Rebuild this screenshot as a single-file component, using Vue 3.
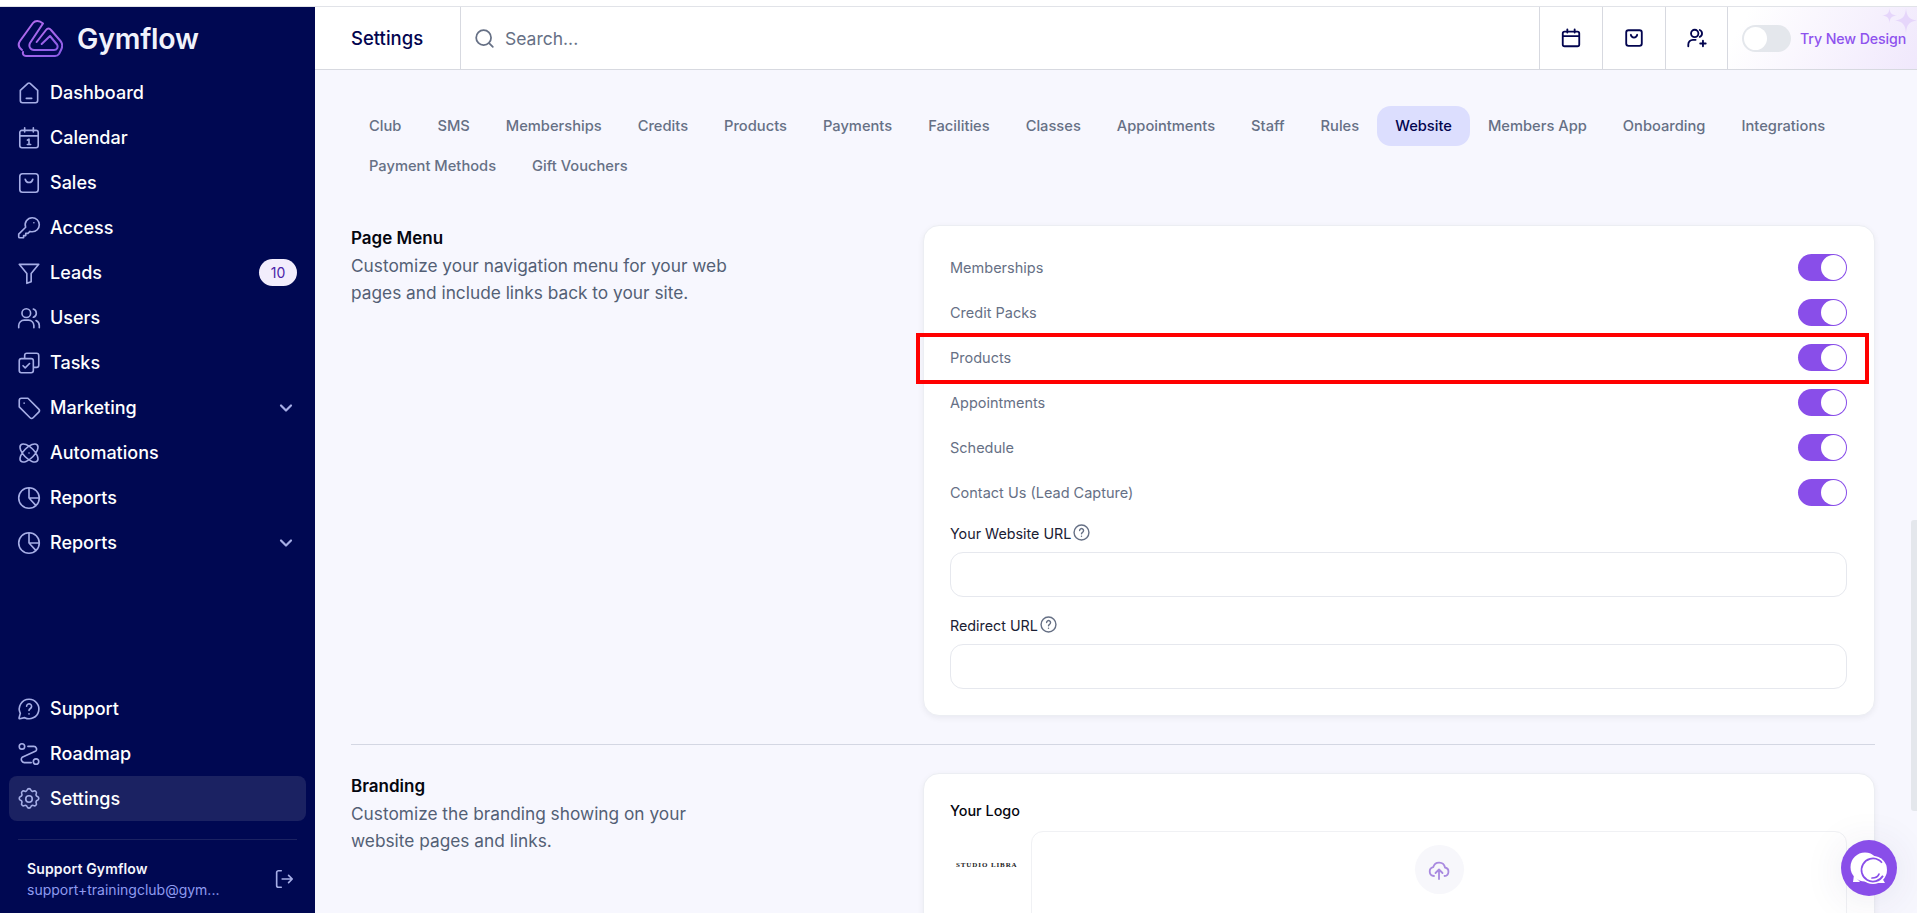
<script setup>
const topNav = [
  { label: 'Dashboard', icon: 'home' },
  { label: 'Calendar', icon: 'calendar' },
  { label: 'Sales', icon: 'bag' },
  { label: 'Access', icon: 'key' },
  { label: 'Leads', icon: 'filter', badge: '10' },
  { label: 'Users', icon: 'users' },
  { label: 'Tasks', icon: 'tasks' },
  { label: 'Marketing', icon: 'tag', arrow: true },
  { label: 'Automations', icon: 'atom' },
  { label: 'Reports', icon: 'pie' },
  { label: 'Reports', icon: 'pie', arrow: true },
]
const bottomNav = [
  { label: 'Support', icon: 'support' },
  { label: 'Roadmap', icon: 'route' },
  { label: 'Settings', icon: 'gear', active: true },
]
const icons = {
  home: 'M4 9.500 11 3.200a1.500 1.500 0 0 1 2 0l7 6.300V19a2 2 0 0 1-2 2H6a2 2 0 0 1-2-2ZM9.500 17h5',
  calendar: 'M3.500 7a2 2 0 0 1 2-2h13a2 2 0 0 1 2 2v12a2 2 0 0 1-2 2h-13a2 2 0 0 1-2-2ZM3.500 10h17M8 2.500v4M16 2.500v4M10.500 14l1.500-1v5M10.500 18h3',
  bag: 'M3.500 6A2.500 2.500 0 0 1 6 3.500h12A2.500 2.500 0 0 1 20.500 6v12a2.500 2.500 0 0 1-2.500 2.500H6A2.500 2.500 0 0 1 3.500 18ZM8.500 8.500c.5 2 2 3 3.500 3s3-1 3.500-3',
  key: 'M15 2.500a6.500 6.500 0 0 1 0 13c-.8 0-1.500-.1-2.100-.4L11 17H9v2H7v2H3.500a1 1 0 0 1-1-1v-2.300l6.400-6.400A6.500 6.500 0 0 1 15 2.500ZM16.500 7.200h.01',
  filter: 'M3 4h18l-7 8.500V20l-4 1.500v-9Z',
  users: 'M9.500 3.500a4 4 0 1 1 0 8 4 4 0 0 1 0-8ZM2.500 21v-2a5 5 0 0 1 5-5h4a5 5 0 0 1 5 5v2M16 3.700a4 4 0 0 1 0 7.600M21.500 21v-2a5 5 0 0 0-3-4.600',
  tasks: 'M8 8V5a2 2 0 0 1 2-2h9a2 2 0 0 1 2 2v9a2 2 0 0 1-2 2h-3M3 10a2 2 0 0 1 2-2h9a2 2 0 0 1 2 2v9a2 2 0 0 1-2 2H5a2 2 0 0 1-2-2ZM6.500 14.500l2 2 4-4',
  tag: 'M3 5a2 2 0 0 1 2-2h6l10 10a2 2 0 0 1 0 2.800L15.800 21a2 2 0 0 1-2.800 0L3 11ZM7.500 7.500h.01',
  atom: 'M12 12h.01M19.500 4.500c-2-2-7 0-11 4s-6 9-4 11 7 0 11-4 6-9 4-11ZM4.500 4.500c-2 2 0 7 4 11s9 6 11 4 0-7-4-11-9-6-11-4Z',
  pie: 'M12 2.500a9.500 9.500 0 1 0 9.500 9.500A9.500 9.500 0 0 0 12 2.500ZM12 2.500V12h9.500M12 12l6.500 7',
  support: 'M12 3a9 9 0 1 1-4 17l-4.500 1a.6.6 0 0 1-.7-.7L4 16a9 9 0 0 1 8-13ZM9.800 9.500a2.300 2.300 0 1 1 3.500 2c-.8.5-1.300 1-1.300 1.800M12 16.500h.01',
  route: 'M5.500 2.500a2.500 2.500 0 1 1 0 5 2.500 2.500 0 0 1 0-5ZM18.500 16.500a2.500 2.500 0 1 1 0 5 2.500 2.500 0 0 1 0-5ZM11 5h5.500a2.500 2.500 0 0 1 1.800 4.200L5.700 15a3 3 0 0 0 2 5H14',
  gear: 'M12 9a3 3 0 1 1 0 6 3 3 0 0 1 0-6ZM10.300 3.600a1.800 1.800 0 0 1 3.400 0 1.800 1.800 0 0 0 2.600 1.100 1.800 1.800 0 0 1 2.400 2.400 1.800 1.800 0 0 0 1.100 2.600 1.800 1.800 0 0 1 0 3.400 1.800 1.800 0 0 0-1.100 2.600 1.800 1.800 0 0 1-2.400 2.400 1.800 1.800 0 0 0-2.600 1.100 1.800 1.800 0 0 1-3.400 0 1.800 1.800 0 0 0-2.600-1.100 1.800 1.800 0 0 1-2.400-2.400 1.800 1.800 0 0 0-1.100-2.600 1.800 1.800 0 0 1 0-3.400 1.800 1.800 0 0 0 1.100-2.600 1.800 1.800 0 0 1 2.400-2.400 1.800 1.800 0 0 0 2.600-1.100Z',
}
const tabs = ['Club', 'SMS', 'Memberships', 'Credits', 'Products', 'Payments', 'Facilities', 'Classes', 'Appointments', 'Staff', 'Rules', 'Website', 'Members App', 'Onboarding', 'Integrations', 'Payment Methods', 'Gift Vouchers']
const menuRows = ['Memberships', 'Credit Packs', 'Products', 'Appointments', 'Schedule', 'Contact Us (Lead Capture)']
</script>

<template>
  <div class="page">
    <aside class="sidebar">
      <div class="logo">
        <svg class="logo-mark" viewBox="0 0 46 40" fill="none" stroke="url(#logoGrad)" stroke-width="2" stroke-linejoin="round" stroke-linecap="round">
          <defs>
            <linearGradient id="logoGrad" x1="0" y1="0" x2="1" y2="1">
              <stop offset="0" stop-color="#bb6eee" />
              <stop offset="1" stop-color="#8a5be6" />
            </linearGradient>
          </defs>
          <path d="M5 31C1 28 1 25 3 22L16 4C18 1.500 22 1 26 4.500L13 24C11.500 27 13 31 17 31H37C40 31 41.500 28 40 25.500L33 17L24.700 25" />
          <path d="M19.700 23L29 11C30.500 9 32.500 9 34 11L43.500 22C46 25 45.500 28 44 31L42 35C41 36.500 40 37 38 37H9C6.500 37 5.500 35 6 33" />
        </svg>
        <span>Gymflow</span>
      </div>
      <nav class="nav">
        <a v-for="(item, i) in topNav" :key="i" class="nav-item">
          <svg class="nav-icon" viewBox="0 0 24 24" fill="none" stroke="#a6aee6" stroke-width="1.5" stroke-linecap="round" stroke-linejoin="round"><path :d="icons[item.icon]" /></svg>
          <span class="nav-label">{{ item.label }}</span>
          <span v-if="item.badge" class="badge">{{ item.badge }}</span>
          <svg v-if="item.arrow" class="chev" viewBox="0 0 16 16" fill="none" stroke="#a6aee6" stroke-width="2.2" stroke-linecap="round" stroke-linejoin="round"><path d="M3 5.500 8 10.500l5-5" /></svg>
        </a>
      </nav>
      <nav class="nav nav-bottom">
        <a v-for="item in bottomNav" :key="item.label" class="nav-item" :class="{ active: item.active }">
          <svg class="nav-icon" viewBox="0 0 24 24" fill="none" stroke="#a6aee6" stroke-width="1.5" stroke-linecap="round" stroke-linejoin="round"><path :d="icons[item.icon]" /></svg>
          <span class="nav-label">{{ item.label }}</span>
        </a>
      </nav>
      <div class="account">
        <div class="account-text">
          <div class="account-name">Support Gymflow</div>
          <div class="account-mail">support+trainingclub@gym...</div>
        </div>
        <svg class="logout" viewBox="0 0 24 24" fill="none" stroke="#a6aee6" stroke-width="1.8" stroke-linecap="round" stroke-linejoin="round"><path d="M9 3H6a2 2 0 0 0-2 2v14a2 2 0 0 0 2 2h3M10 12h11M17 8l4 4-4 4" /></svg>
      </div>
    </aside>

    <div class="main">
      <header class="topbar">
        <div class="title">Settings</div>
        <div class="search">
          <svg viewBox="0 0 24 24" fill="none" stroke="#667085" stroke-width="2" stroke-linecap="round"><circle cx="11" cy="11" r="8.500" /><path d="m17.500 17.500 4 4" /></svg>
          <span>Search...</span>
        </div>
        <div class="top-btn">
          <svg viewBox="0 0 24 24" fill="none" stroke="#02044f" stroke-width="2" stroke-linecap="round" stroke-linejoin="round"><path d="M3 7a2 2 0 0 1 2-2h14a2 2 0 0 1 2 2v12a2 2 0 0 1-2 2H5a2 2 0 0 1-2-2ZM3 10h18M8 2.500V6M16 2.500V6" /></svg>
        </div>
        <div class="top-btn">
          <svg viewBox="0 0 24 24" fill="none" stroke="#02044f" stroke-width="2" stroke-linecap="round" stroke-linejoin="round"><path :d="icons.bag" /></svg>
        </div>
        <div class="top-btn wide">
          <svg viewBox="0 0 24 24" fill="none" stroke="#02044f" stroke-width="2" stroke-linecap="round" stroke-linejoin="round"><path d="M9.500 3a4 4 0 1 1 0 8 4 4 0 0 1 0-8ZM2.500 21v-2a5 5 0 0 1 5-5h3M15 3.300a4 4 0 0 1 0 7.400M18.500 15v6M15.500 18h6" /></svg>
        </div>
        <div class="try">
          <span class="try-toggle"><span></span></span>
          <span class="try-text">Try New Design</span>
          <svg class="sparkle" viewBox="0 0 36 26" fill="#e6d6fb"><path d="M8.500 0c.4 5 2 7 7.500 7.500-5.500.5-7.100 2.500-7.500 7.500-.4-5-2-7-7.500-7.500 5.500-.5 7.100-2.500 7.500-7.500Z" /><path d="M25 0c.6 8 3 11.500 11 12.500-8 1-10.400 4.500-11 12.500-.6-8-3-11.500-11-12.500 8-1 10.400-4.500 11-12.500Z" /></svg>
        </div>
      </header>

      <div class="content">
        <div class="tabs">
          <span v-for="tab in tabs" :key="tab" class="tab" :class="{ current: tab === 'Website' }">{{ tab }}</span>
        </div>

        <section class="section">
          <div class="intro">
            <h2>Page Menu</h2>
            <p>Customize your navigation menu for your web pages and include links back to your site.</p>
          </div>
          <div class="card">
            <div v-for="row in menuRows" :key="row" class="row" :class="{ marked: row === 'Products' }">
              <span>{{ row }}</span>
              <span class="switch"><span></span></span>
            </div>
            <label class="field-label">Your Website URL
              <svg viewBox="0 0 24 24" fill="none" stroke="#667085" stroke-width="2" stroke-linecap="round"><circle cx="12" cy="12" r="10.500" /><path d="M9.300 9.200a2.800 2.800 0 1 1 4.200 2.500c-.9.600-1.500 1.100-1.500 2M12 17.300h.01" /></svg>
            </label>
            <div class="input"></div>
            <label class="field-label second">Redirect URL
              <svg viewBox="0 0 24 24" fill="none" stroke="#667085" stroke-width="2" stroke-linecap="round"><circle cx="12" cy="12" r="10.500" /><path d="M9.300 9.200a2.800 2.800 0 1 1 4.200 2.500c-.9.600-1.500 1.100-1.500 2M12 17.300h.01" /></svg>
            </label>
            <div class="input"></div>
          </div>
        </section>

        <hr class="divider" />

        <section class="section">
          <div class="intro">
            <h2>Branding</h2>
            <p>Customize the branding showing on your website pages and links.</p>
          </div>
          <div class="card logo-card">
            <div class="logo-title">Your Logo</div>
            <div class="logo-row">
              <div class="logo-preview">STUDIO LIBRA</div>
              <div class="dropzone">
                <span class="upload">
                  <svg viewBox="0 0 24 24" fill="none" stroke="#a98ae0" stroke-width="1.800" stroke-linecap="round" stroke-linejoin="round"><path d="M7 18a4.500 4.500 0 0 1-.7-8.900A6 6 0 0 1 18 9.500a4.300 4.300 0 0 1-.5 8.500M12 21v-9M8.500 15l3.500-3.500 3.500 3.500" /></svg>
                </span>
              </div>
            </div>
          </div>
        </section>
      </div>
    </div>

    <div class="scrollbar"></div>
    <div class="chat">
      <svg viewBox="0 0 56 56">
        <circle cx="24" cy="27" r="14.500" fill="#fff" />
        <path d="M13 35l-1 7h7Z" fill="#fff" />
        <circle cx="32" cy="30" r="14" fill="#fff" />
        <path d="M41 38l3 5h-8Z" fill="#fff" />
        <circle cx="32" cy="30" r="11.500" fill="#fff" stroke="#894ee9" stroke-width="1.700" stroke-dasharray="58 14" transform="rotate(30 32 30)" />
        <path d="M31 38c3 0 6-1 7-4" fill="none" stroke="#894ee9" stroke-width="1.700" stroke-linecap="round" />
      </svg>
    </div>
  </div>
</template>

<style>
html, body { margin: 0; height: 100%; overflow: hidden; background: #fff; }
</style>

<style scoped>
.page {
  position: relative;
  display: flex;
  height: 906px;
  margin-top: 7px;
  overflow: hidden;
  font-family: Inter, "Liberation Sans", sans-serif;
  box-shadow: 0 -1px 0 #e1e3e8;
}
.sidebar {
  width: 315px;
  flex: none;
  display: flex;
  flex-direction: column;
  background: #000852;
  color: #fff;
}
.logo {
  display: flex;
  align-items: center;
  gap: 14px;
  height: 63px;
  padding-left: 17px;
  font-size: 28.5px;
  font-weight: 600;
  letter-spacing: -.2px;
  color: #f1f2fb;
}
.logo-mark { width: 46px; height: 40px; flex: none; }
.nav { display: flex; flex-direction: column; padding: 0 9px; }
.nav-item {
  display: flex;
  align-items: center;
  height: 45px;
  padding: 0 9px 0 7px;
  border-radius: 8px;
  font-size: 18px;
  font-weight: 500;
}
.nav-icon { width: 26px; height: 26px; flex: none; margin-right: 8px; }
.nav-label { flex: 1; }
.badge {
  width: 38px;
  height: 27px;
  border-radius: 14px;
  background: #f2edfc;
  color: #4a22a8;
  font-size: 14px;
  text-align: center;
  line-height: 27px;
  font-weight: 400;
}
.chev { width: 16px; height: 16px; margin-right: 3px; }
.nav-bottom { margin-top: auto; }
.active { background: #1b2262; }
.account {
  display: flex;
  align-items: center;
  justify-content: space-between;
  margin: 18px 18px 0;
  padding: 5px 2px 0 9px;
  border-top: 1px solid #1b2262;
  height: 74px;
  box-sizing: border-box;
}
.account-name { font-size: 14px; font-weight: 600; letter-spacing: .15px; color: #f4f5fc; }
.account-mail { margin-top: 4px; font-size: 14px; color: #8f9bf0; }
.logout { width: 22px; height: 22px; }

.main { flex: 1; min-width: 0; display: flex; flex-direction: column; background: #f7f7fe; }
.topbar {
  display: flex;
  height: 63px;
  box-sizing: border-box;
  flex: none;
  background: #fff;
  border-bottom: 1px solid #d7d9e0;
}
.title {
  width: 109px;
  padding-left: 36px;
  font-size: 18.5px;
  font-weight: 500;
  line-height: 62px;
  color: #02044f;
  border-right: 1px solid #d7d9e0;
}
.search {
  flex: 1;
  display: flex;
  align-items: center;
  gap: 10px;
  padding-left: 13px;
  color: #667085;
  font-size: 17.5px;
}
.search svg { width: 21px; height: 21px; }
.top-btn {
  width: 63px;
  box-sizing: border-box;
  display: flex;
  align-items: center;
  justify-content: center;
  border-left: 1px solid #d7d9e0;
}
.top-btn.wide { width: 62px; }
.top-btn svg { width: 22px; height: 22px; }
.try {
  position: relative;
  width: 190px;
  display: flex;
  align-items: center;
  gap: 9px;
  padding-left: 14px;
  box-sizing: border-box;
  border-left: 1px solid #d7d9e0;
  background: linear-gradient(120deg, #fff 10%, #f0e8fc 100%);
}
.try-toggle {
  width: 49px;
  height: 27px;
  padding: 2px;
  box-sizing: border-box;
  border-radius: 14px;
  background: #e4e7ec;
}
.try-toggle span { display: block; width: 23px; height: 23px; border-radius: 50%; background: #fff; }
.try-text { font-size: 14.2px; font-weight: 500; color: #8e52ee; white-space: nowrap; letter-spacing: -.1px; }
.sparkle { position: absolute; right: 0; top: 1px; width: 36px; height: 26px; }

.content { flex: 1; padding: 36px 42px 0 36px; overflow: hidden; }
.tabs { display: flex; flex-wrap: wrap; }
.tab {
  height: 40px;
  padding: 0 18px;
  border-radius: 14px;
  font-size: 14.7px;
  font-weight: 500;
  line-height: 40px;
  color: #667085;
}
.current { background: #dcdefe; color: #02044f; }
.section { display: grid; grid-template-columns: 572px 1fr; }
.tabs + .section { margin-top: 39px; }
.intro h2 { margin: 0; font-size: 17px; font-weight: 600; line-height: 27px; color: #05060f; }
.intro p { margin: 0; width: 390px; font-size: 17.3px; line-height: 27px; color: #535f75; }
.card {
  position: relative;
  padding: 19px 27px 26px 26px;
  border-radius: 16px;
  background: #fff;
  border: 1px solid #eceef3;
  box-shadow: 0 2px 6px rgba(16, 24, 40, .06);
}
.row {
  position: relative;
  display: flex;
  align-items: center;
  justify-content: space-between;
  height: 45px;
  font-size: 14.5px;
  color: #667085;
}
/* red annotation box round the Products row */
.marked::after {
  content: '';
  position: absolute;
  left: -34px;
  right: -22px;
  top: -2px;
  height: 51px;
  border: 4px solid #ff0000;
  box-sizing: border-box;
  pointer-events: none;
}
.switch {
  width: 49px;
  height: 27px;
  padding: 1px;
  box-sizing: border-box;
  border-radius: 14px;
  background: #894ee9;
  display: flex;
  justify-content: flex-end;
}
.switch span { width: 25px; height: 25px; border-radius: 50%; background: #fff; }
.field-label {
  display: flex;
  align-items: center;
  gap: 2px;
  margin-top: 6px;
  height: 24px;
  font-size: 14.3px;
  color: #1a2033;
}
.field-label.second { margin-top: 16px; }
.field-label svg { width: 17px; height: 17px; margin-top: -2px; }
.input {
  height: 45px;
  box-sizing: border-box;
  margin-top: 7px;
  border: 1px solid #e6e8ee;
  border-radius: 13px;
}
.divider { margin: 28px 0; border: 0; border-top: 1px solid #d4d7e3; }
.logo-card { height: 300px; box-sizing: border-box; }
.logo-title { margin-top: 6px; font-size: 14.4px; font-weight: 500; line-height: 24px; color: #05060f; }
.logo-row { display: flex; margin-top: 8px; }
.logo-preview {
  width: 81px;
  flex: none;
  padding: 30px 0 0 6px;
  box-sizing: border-box;
  font-family: "Liberation Serif", serif;
  font-size: 7px;
  letter-spacing: .9px;
  font-weight: 700;
  color: #222;
  white-space: nowrap;
}
.dropzone {
  flex: 1;
  height: 200px;
  border: 1px solid #f0f1f4;
  border-radius: 12px;
  display: flex;
  justify-content: center;
  padding-top: 13px;
  box-sizing: border-box;
}
.upload {
  width: 49px;
  height: 49px;
  border-radius: 50%;
  background: #f7f7fb;
  display: flex;
  align-items: center;
  justify-content: center;
}
.upload svg { width: 24px; height: 24px; }
.scrollbar {
  position: absolute;
  right: 0;
  top: 513px;
  width: 6px;
  height: 291px;
  background: #e4e7ec;
  border-radius: 3px 0 0 3px;
}
.chat {
  position: absolute;
  right: 20px;
  bottom: 17px;
  width: 56px;
  height: 56px;
  border-radius: 50%;
  background: #894ee9;
  box-shadow: 0 4px 40px rgba(60, 50, 110, .1);
}
.chat svg { display: block; width: 56px; height: 56px; }
</style>
